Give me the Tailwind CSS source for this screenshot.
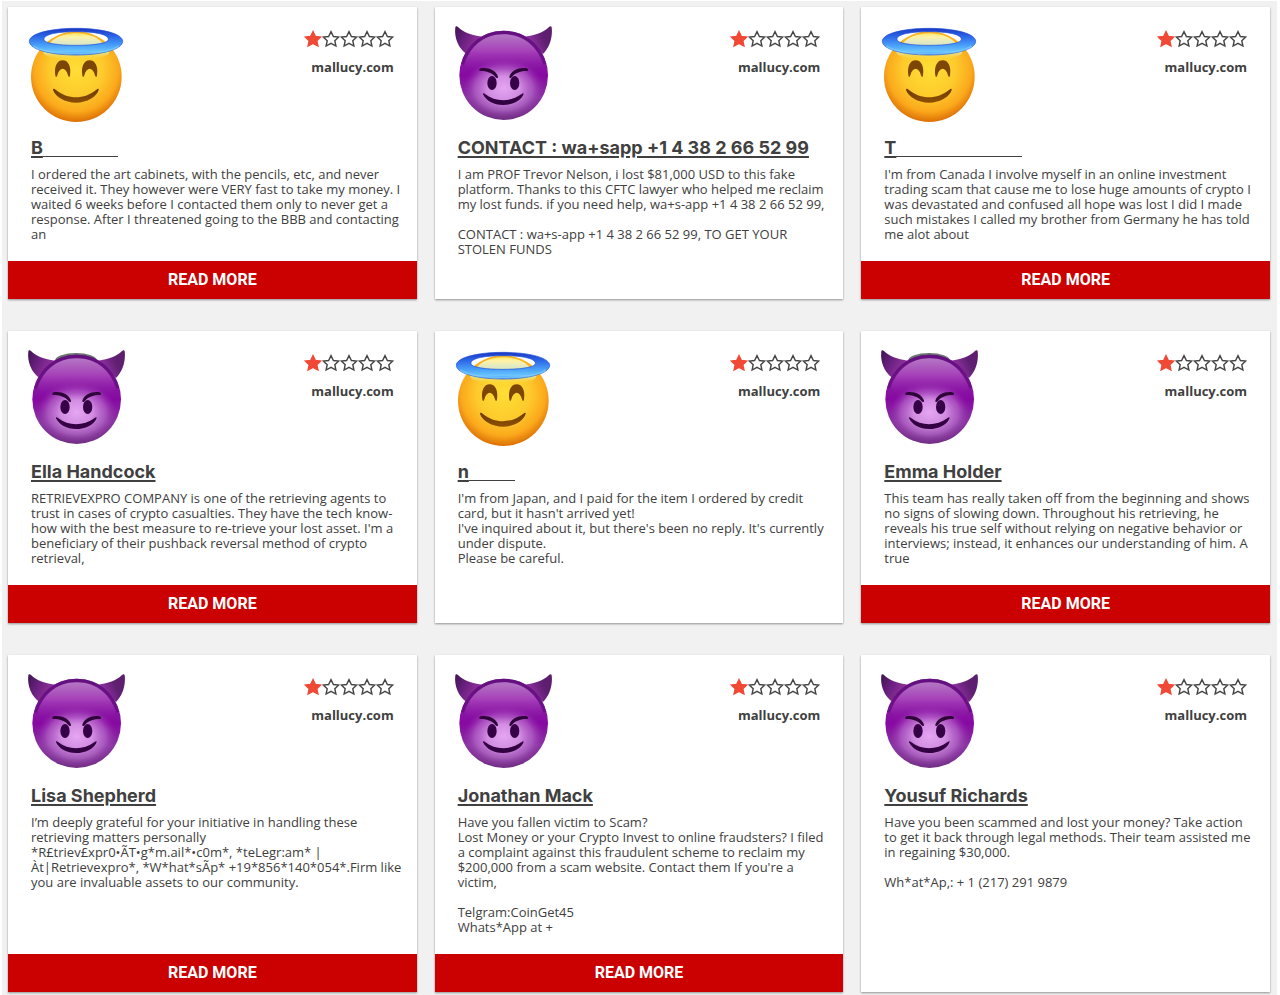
<!DOCTYPE html>
<html lang="en">
<head>
    <meta charset="UTF-8">
    <meta name="viewport" content="width=device-width, initial-scale=1.0">
    <title>mallucy.com reviews</title>
    <script src="https://cdn.jsdelivr.net/npm/@tailwindcss/browser@4"></script>
</head>
<body class="bg-white min-h-screen flex flex-col pt-px pl-[2px] pr-[3px] font-['Open_Sans',sans-serif] text-[#404040]">

    <!-- Shared icons -->
    <svg class="absolute w-0 h-0" aria-hidden="true">
        <defs>
            <radialGradient id="angelFace" cx="50%" cy="42%" r="58%">
                <stop offset="0" stop-color="#ffde35"/>
                <stop offset="0.5" stop-color="#fdcb2c"/>
                <stop offset="0.8" stop-color="#fba91c"/>
                <stop offset="1" stop-color="#dc7005"/>
            </radialGradient>
            <linearGradient id="angelShine" x1="0" y1="0" x2="0" y2="1">
                <stop offset="0" stop-color="#ffe766"/>
                <stop offset="0.14" stop-color="#fff3a8"/>
                <stop offset="0.35" stop-color="#dfe9c4"/>
                <stop offset="0.72" stop-color="#dde3a0"/>
                <stop offset="1" stop-color="#ffe14a" stop-opacity="0"/>
            </linearGradient>
            <linearGradient id="halo" x1="0" y1="0" x2="0" y2="1">
                <stop offset="0" stop-color="#1c36c0"/>
                <stop offset="0.3" stop-color="#2b66e8"/>
                <stop offset="0.65" stop-color="#4aa2fa"/>
                <stop offset="0.88" stop-color="#6cc6ff"/>
                <stop offset="1" stop-color="#2f80f0"/>
            </linearGradient>
            <linearGradient id="angelMouth" x1="0" y1="0" x2="0" y2="1">
                <stop offset="0" stop-color="#6d3c02"/>
                <stop offset="1" stop-color="#8d4f04"/>
            </linearGradient>
            <linearGradient id="devilFace" x1="0" y1="0" x2="0" y2="1">
                <stop offset="0" stop-color="#6c1788"/>
                <stop offset="0.3" stop-color="#8a1fa4"/>
                <stop offset="0.5" stop-color="#8708a2"/>
                <stop offset="0.75" stop-color="#8a35a2"/>
                <stop offset="1" stop-color="#713084"/>
            </linearGradient>
            <radialGradient id="devilGlow" cx="50%" cy="50%" r="50%">
                <stop offset="0" stop-color="#e5a6f2"/>
                <stop offset="0.4" stop-color="#d793e6" stop-opacity="0.95"/>
                <stop offset="0.72" stop-color="#bd74d0" stop-opacity="0.6"/>
                <stop offset="1" stop-color="#9a38b0" stop-opacity="0"/>
            </radialGradient>
            <linearGradient id="devilShine" x1="0" y1="0" x2="0" y2="1">
                <stop offset="0" stop-color="#b477c4"/>
                <stop offset="0.45" stop-color="#a640b9"/>
                <stop offset="1" stop-color="#8b0ca6" stop-opacity="0"/>
            </linearGradient>
            <linearGradient id="hornLeft" x1="0" y1="0" x2="1" y2="0.5">
                <stop offset="0" stop-color="#3f1450"/>
                <stop offset="0.45" stop-color="#6a2080"/>
                <stop offset="1" stop-color="#98359f"/>
            </linearGradient>
            <linearGradient id="hornRight" x1="1" y1="0" x2="0" y2="0.5">
                <stop offset="0" stop-color="#5a1d6b"/>
                <stop offset="0.45" stop-color="#612073"/>
                <stop offset="1" stop-color="#9a35ad"/>
            </linearGradient>
        </defs>

        <symbol id="angel" viewBox="21 27 294 294">
            <ellipse cx="169" cy="182" rx="136" ry="136" fill="url(#angelFace)"/>
            <path d="M86 88C112 40 226 40 252 88C282 112 276 128 169 130C62 128 56 112 86 88Z" fill="url(#angelShine)"/>
            <path fill-rule="evenodd" d="M168 37C246 37 308 53 308 76C308 100 246 117 168 117C90 117 28 100 28 76C28 53 90 37 168 37ZM168 47C115 47 72 54 72 70C72 82 115 88 168 88C221 88 265 82 265 70C265 54 221 47 168 47Z" fill="url(#halo)" stroke="#1f4fd8" stroke-width="2"/>
            <path d="M40 90C76 121 260 121 296 90" fill="none" stroke="#8ad8ff" stroke-opacity="0.5" stroke-width="5"/>
            <path d="M106 178C102 152 111 133 128 133C145 133 154 152 150 178C149 185 146 184 144 178C138 152 118 152 112 178C110 184 107 185 106 178Z" fill="#7d4603"/>
            <path d="M187 178C183 152 192 133 209 133C226 133 235 152 231 178C230 185 227 184 225 178C219 152 199 152 193 178C191 184 188 185 187 178Z" fill="#7d4603"/>
            <path d="M99 222C99 217 103 218 107 221C143 251 193 251 229 221C233 218 237 217 236 222C230 242 202 260 168 260C134 260 106 242 99 222Z" fill="url(#angelMouth)"/>
        </symbol>

        <symbol id="devil" viewBox="21 27 294 294">
            <path d="M25 34C26 29 30 30 33 33C50 49 70 57 106 62L58 114C34 96 21 66 25 34Z" fill="url(#hornLeft)"/>
            <path d="M314 34C313 29 309 30 306 33C289 49 269 57 233 62L288 114C306 96 318 66 314 34Z" fill="url(#hornRight)"/>
            <ellipse cx="170" cy="178" rx="133" ry="134" fill="url(#devilFace)"/>
            <ellipse cx="170" cy="217" rx="120" ry="92" fill="url(#devilGlow)"/>
            <path d="M170 55C232 55 272 94 286 142C286 178 54 178 54 142C68 94 108 55 170 55Z" fill="url(#devilShine)"/>
            <path d="M170 49C232 49 276 88 294 145M170 49C108 49 64 88 46 145" fill="none" stroke="#620d7c" stroke-opacity="0.75" stroke-width="9"/>
            <path d="M97 162C96 157 103 156 110 156C130 156 148 166 153 182C154 186 149 188 146 184C136 170 118 165 101 165C98 165 97 164 97 162Z" fill="#2e0439"/>
            <path d="M243 162C244 157 237 156 230 156C210 156 192 166 187 182C186 186 191 188 194 184C204 170 222 165 239 165C242 165 243 164 243 162Z" fill="#2e0439"/>
            <ellipse cx="135" cy="201" rx="14" ry="21" fill="#360047"/>
            <ellipse cx="203" cy="201" rx="14" ry="21" fill="#360047"/>
            <path d="M108 235C107 230 111 231 114 234C146 259 190 259 224 234C228 231 231 231 229 236C221 254 196 267 168 267C140 267 117 254 108 235Z" fill="#330042"/>
        </symbol>

        <symbol id="star" viewBox="0 0 18 18">
            <path d="M9 1.6L11.4 6.5L16.7 7.1L12.8 10.7L13.9 16L9 13.3L4.1 16L5.2 10.7L1.3 7.1L6.6 6.5Z" stroke-width="1.4" stroke-linejoin="miter"/>
        </symbol>

        <symbol id="rating" viewBox="0 0 90 18">
            <use href="#star" width="18" height="18" fill="#f04935" stroke="#f04935"/>
            <use href="#star" x="18" width="18" height="18" fill="none" stroke="#444"/>
            <use href="#star" x="36" width="18" height="18" fill="none" stroke="#444"/>
            <use href="#star" x="54" width="18" height="18" fill="none" stroke="#444"/>
            <use href="#star" x="72" width="18" height="18" fill="none" stroke="#444"/>
        </symbol>
    </svg>

    <main class="grow bg-[#f1f1f1] pl-[6px] pr-[7px] pt-[6px] pb-[3px]">
        <div class="grid grid-cols-3 gap-x-[18px] gap-y-8">

            <article class="bg-white flex flex-col shadow-[0_1px_2px_rgba(0,0,0,0.4)]">
                <header class="flex justify-between pt-[18px] pl-[19px] pr-[23px]">
                    <svg class="size-[98px]" role="img" aria-label="Angel"><use href="#angel"/></svg>
                    <div class="flex flex-col items-end pt-[5px]">
                        <svg class="w-[90px] h-[18px]" role="img" aria-label="1 out of 5 stars"><use href="#rating"/></svg>
                        <a href="#" class="mt-[9px] text-[13px] leading-[20px] font-bold">mallucy.com</a>
                    </div>
                </header>
                <h2 class="mt-[13px] px-[23px] font-[Inter,sans-serif] text-[18px] leading-[24px] font-bold"><a href="#" class="underline underline-offset-2 decoration-2">B</a><span class="inline-block w-[75px] h-[21px] border-b border-[#404040] align-top"></span></h2>
                <p class="mt-[7px] pl-[23px] pr-[13px] pb-[19px] text-[13px] leading-[15px]">I ordered the art cabinets, with the pencils, etc, and never received it. They however were VERY fast to take my money. I waited 6 weeks before I contacted them only to never get a response. After I threatened going to the BBB and contacting an</p>
                <button type="button" class="mt-auto h-[38px] bg-[#cb0000] text-white font-[Roboto,sans-serif] text-[16px] font-bold">READ MORE</button>
            </article>

            <article class="bg-white flex flex-col shadow-[0_1px_2px_rgba(0,0,0,0.4)]">
                <header class="flex justify-between pt-[18px] pl-[19px] pr-[23px]">
                    <svg class="size-[98px]" role="img" aria-label="Devil"><use href="#devil"/></svg>
                    <div class="flex flex-col items-end pt-[5px]">
                        <svg class="w-[90px] h-[18px]" role="img" aria-label="1 out of 5 stars"><use href="#rating"/></svg>
                        <a href="#" class="mt-[9px] text-[13px] leading-[20px] font-bold">mallucy.com</a>
                    </div>
                </header>
                <h2 class="mt-[13px] px-[23px] font-[Inter,sans-serif] text-[18px] leading-[24px] font-bold"><a href="#" class="underline underline-offset-2 decoration-2">CONTACT : wa+sapp +1 4 38 2 66 52 99</a></h2>
                <p class="mt-[7px] pl-[23px] pr-[13px] pb-[19px] text-[13px] leading-[15px]">I am PROF Trevor Nelson, i lost $81,000 USD to this fake platform. Thanks to this CFTC lawyer who helped me reclaim my lost funds. if you need help, wa+s-app +1 4 38 2 66 52 99,<br><br>CONTACT : wa+s-app +1 4 38 2 66 52 99, TO GET YOUR STOLEN FUNDS</p>
            </article>

            <article class="bg-white flex flex-col shadow-[0_1px_2px_rgba(0,0,0,0.4)]">
                <header class="flex justify-between pt-[18px] pl-[19px] pr-[23px]">
                    <svg class="size-[98px]" role="img" aria-label="Angel"><use href="#angel"/></svg>
                    <div class="flex flex-col items-end pt-[5px]">
                        <svg class="w-[90px] h-[18px]" role="img" aria-label="1 out of 5 stars"><use href="#rating"/></svg>
                        <a href="#" class="mt-[9px] text-[13px] leading-[20px] font-bold">mallucy.com</a>
                    </div>
                </header>
                <h2 class="mt-[13px] px-[23px] font-[Inter,sans-serif] text-[18px] leading-[24px] font-bold"><a href="#" class="underline underline-offset-2 decoration-2">T</a><span class="inline-block w-[126px] h-[21px] border-b border-[#404040] align-top"></span></h2>
                <p class="mt-[7px] pl-[23px] pr-[13px] pb-[19px] text-[13px] leading-[15px]">I'm from Canada I involve myself in an online investment trading scam that cause me to lose huge amounts of crypto I was devastated and confused all hope was lost I did I made such mistakes I called my brother from Germany he has told me alot about</p>
                <button type="button" class="mt-auto h-[38px] bg-[#cb0000] text-white font-[Roboto,sans-serif] text-[16px] font-bold">READ MORE</button>
            </article>

            <article class="bg-white flex flex-col shadow-[0_1px_2px_rgba(0,0,0,0.4)]">
                <header class="flex justify-between pt-[18px] pl-[19px] pr-[23px]">
                    <svg class="size-[98px]" role="img" aria-label="Devil"><ellipse cx="49" cy="12" rx="21" ry="8" fill="#6b746f"/><use href="#devil"/></svg>
                    <div class="flex flex-col items-end pt-[5px]">
                        <svg class="w-[90px] h-[18px]" role="img" aria-label="1 out of 5 stars"><use href="#rating"/></svg>
                        <a href="#" class="mt-[9px] text-[13px] leading-[20px] font-bold">mallucy.com</a>
                    </div>
                </header>
                <h2 class="mt-[13px] px-[23px] font-[Inter,sans-serif] text-[18px] leading-[24px] font-bold"><a href="#" class="underline underline-offset-2 decoration-2">Ella Handcock</a></h2>
                <p class="mt-[7px] pl-[23px] pr-[13px] pb-[19px] text-[13px] leading-[15px]">RETRIEVEXPRO COMPANY is one of the retrieving agents to trust in cases of crypto casualties. They have the tech know-how with the best measure to re-trieve your lost asset. I'm a beneficiary of their pushback reversal method of crypto retrieval,</p>
                <button type="button" class="mt-auto h-[38px] bg-[#cb0000] text-white font-[Roboto,sans-serif] text-[16px] font-bold">READ MORE</button>
            </article>

            <article class="bg-white flex flex-col shadow-[0_1px_2px_rgba(0,0,0,0.4)]">
                <header class="flex justify-between pt-[18px] pl-[19px] pr-[23px]">
                    <svg class="size-[98px]" role="img" aria-label="Angel"><use href="#angel"/></svg>
                    <div class="flex flex-col items-end pt-[5px]">
                        <svg class="w-[90px] h-[18px]" role="img" aria-label="1 out of 5 stars"><use href="#rating"/></svg>
                        <a href="#" class="mt-[9px] text-[13px] leading-[20px] font-bold">mallucy.com</a>
                    </div>
                </header>
                <h2 class="mt-[13px] px-[23px] font-[Inter,sans-serif] text-[18px] leading-[24px] font-bold"><a href="#" class="underline underline-offset-2 decoration-2">n</a><span class="inline-block w-[46px] h-[21px] border-b border-[#404040] align-top"></span></h2>
                <p class="mt-[7px] pl-[23px] pr-[13px] pb-[19px] text-[13px] leading-[15px]">I'm from Japan, and I paid for the item I ordered by credit card, but it hasn't arrived yet!<br>I've inquired about it, but there's been no reply. It's currently under dispute.<br>Please be careful.</p>
            </article>

            <article class="bg-white flex flex-col shadow-[0_1px_2px_rgba(0,0,0,0.4)]">
                <header class="flex justify-between pt-[18px] pl-[19px] pr-[23px]">
                    <svg class="size-[98px]" role="img" aria-label="Devil"><ellipse cx="49" cy="12" rx="21" ry="8" fill="#6b746f"/><use href="#devil"/></svg>
                    <div class="flex flex-col items-end pt-[5px]">
                        <svg class="w-[90px] h-[18px]" role="img" aria-label="1 out of 5 stars"><use href="#rating"/></svg>
                        <a href="#" class="mt-[9px] text-[13px] leading-[20px] font-bold">mallucy.com</a>
                    </div>
                </header>
                <h2 class="mt-[13px] px-[23px] font-[Inter,sans-serif] text-[18px] leading-[24px] font-bold"><a href="#" class="underline underline-offset-2 decoration-2">Emma Holder</a></h2>
                <p class="mt-[7px] pl-[23px] pr-[13px] pb-[19px] text-[13px] leading-[15px]">This team has really taken off from the beginning and shows no signs of slowing down. Throughout his retrieving, he reveals his true self without relying on negative behavior or interviews; instead, it enhances our understanding of him. A true</p>
                <button type="button" class="mt-auto h-[38px] bg-[#cb0000] text-white font-[Roboto,sans-serif] text-[16px] font-bold">READ MORE</button>
            </article>

            <article class="bg-white flex flex-col shadow-[0_1px_2px_rgba(0,0,0,0.4)]">
                <header class="flex justify-between pt-[18px] pl-[19px] pr-[23px]">
                    <svg class="size-[98px]" role="img" aria-label="Devil"><use href="#devil"/></svg>
                    <div class="flex flex-col items-end pt-[5px]">
                        <svg class="w-[90px] h-[18px]" role="img" aria-label="1 out of 5 stars"><use href="#rating"/></svg>
                        <a href="#" class="mt-[9px] text-[13px] leading-[20px] font-bold">mallucy.com</a>
                    </div>
                </header>
                <h2 class="mt-[13px] px-[23px] font-[Inter,sans-serif] text-[18px] leading-[24px] font-bold"><a href="#" class="underline underline-offset-2 decoration-2">Lisa Shepherd</a></h2>
                <p class="mt-[7px] pl-[23px] pr-[13px] pb-[19px] text-[13px] leading-[15px]">I’m deeply grateful for your initiative in handling these retrieving matters personally<br>*R£triev£xpr0•ÃT•g*m.ail*•c0m*, *teLegr:am* |<br>Àt|Retrievexpro*, *W*hat*sÃp* +19*856*140*054*.Firm like you are invaluable assets to our community.</p>
                <button type="button" class="mt-auto h-[38px] bg-[#cb0000] text-white font-[Roboto,sans-serif] text-[16px] font-bold">READ MORE</button>
            </article>

            <article class="bg-white flex flex-col shadow-[0_1px_2px_rgba(0,0,0,0.4)]">
                <header class="flex justify-between pt-[18px] pl-[19px] pr-[23px]">
                    <svg class="size-[98px]" role="img" aria-label="Devil"><use href="#devil"/></svg>
                    <div class="flex flex-col items-end pt-[5px]">
                        <svg class="w-[90px] h-[18px]" role="img" aria-label="1 out of 5 stars"><use href="#rating"/></svg>
                        <a href="#" class="mt-[9px] text-[13px] leading-[20px] font-bold">mallucy.com</a>
                    </div>
                </header>
                <h2 class="mt-[13px] px-[23px] font-[Inter,sans-serif] text-[18px] leading-[24px] font-bold"><a href="#" class="underline underline-offset-2 decoration-2">Jonathan Mack</a></h2>
                <p class="mt-[7px] pl-[23px] pr-[13px] pb-[19px] text-[13px] leading-[15px]">Have you fallen victim to Scam?<br>Lost Money or your Crypto Invest to online fraudsters? I filed a complaint against this fraudulent scheme to reclaim my $200,000 from a scam website. Contact them If you're a victim,<br><br>Telgram:CoinGet45<br>Whats*App at +</p>
                <button type="button" class="mt-auto h-[38px] bg-[#cb0000] text-white font-[Roboto,sans-serif] text-[16px] font-bold">READ MORE</button>
            </article>

            <article class="bg-white flex flex-col shadow-[0_1px_2px_rgba(0,0,0,0.4)]">
                <header class="flex justify-between pt-[18px] pl-[19px] pr-[23px]">
                    <svg class="size-[98px]" role="img" aria-label="Devil"><use href="#devil"/></svg>
                    <div class="flex flex-col items-end pt-[5px]">
                        <svg class="w-[90px] h-[18px]" role="img" aria-label="1 out of 5 stars"><use href="#rating"/></svg>
                        <a href="#" class="mt-[9px] text-[13px] leading-[20px] font-bold">mallucy.com</a>
                    </div>
                </header>
                <h2 class="mt-[13px] px-[23px] font-[Inter,sans-serif] text-[18px] leading-[24px] font-bold"><a href="#" class="underline underline-offset-2 decoration-2">Yousuf Richards</a></h2>
                <p class="mt-[7px] pl-[23px] pr-[13px] pb-[19px] text-[13px] leading-[15px]">Have you been scammed and lost your money? Take action to get it back through legal methods. Their team assisted me in regaining $30,000.<br><br>Wh*at*Ap,: + 1 (217) 291 9879</p>
            </article>

        </div>
    </main>
</body>
</html>
